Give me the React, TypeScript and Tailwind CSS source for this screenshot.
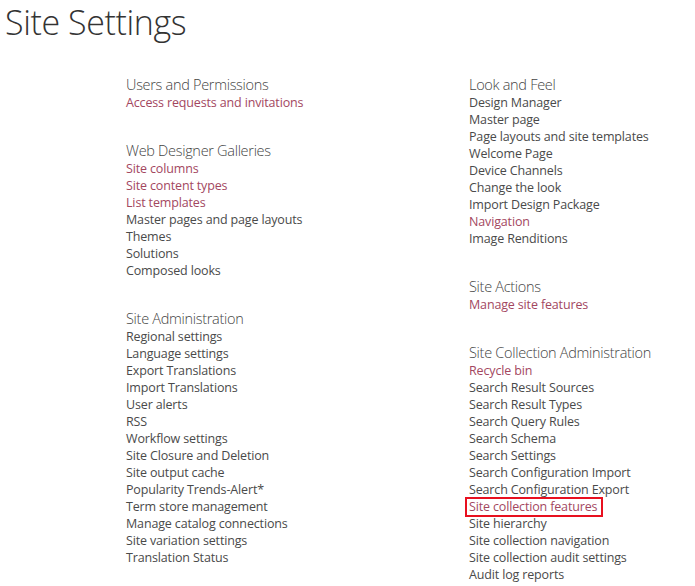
import React from "react";

type Item = { t: string; v?: boolean; box?: boolean };
type Section = { h: string; items: Item[] };

const left: Section[] = [
  { h: "Users and Permissions", items: [{ t: "Access requests and invitations", v: true }] },
  {
    h: "Web Designer Galleries",
    items: [
      { t: "Site columns", v: true },
      { t: "Site content types", v: true },
      { t: "List templates", v: true },
      { t: "Master pages and page layouts" },
      { t: "Themes" },
      { t: "Solutions" },
      { t: "Composed looks" },
    ],
  },
  {
    h: "Site Administration",
    items: [
      { t: "Regional settings" },
      { t: "Language settings" },
      { t: "Export Translations" },
      { t: "Import Translations" },
      { t: "User alerts" },
      { t: "RSS" },
      { t: "Workflow settings" },
      { t: "Site Closure and Deletion" },
      { t: "Site output cache" },
      { t: "Popularity Trends-Alert*" },
      { t: "Term store management" },
      { t: "Manage catalog connections" },
      { t: "Site variation settings" },
      { t: "Translation Status" },
    ],
  },
];

const right: Section[] = [
  {
    h: "Look and Feel",
    items: [
      { t: "Design Manager" },
      { t: "Master page" },
      { t: "Page layouts and site templates" },
      { t: "Welcome Page" },
      { t: "Device Channels" },
      { t: "Change the look" },
      { t: "Import Design Package" },
      { t: "Navigation", v: true },
      { t: "Image Renditions" },
    ],
  },
  { h: "Site Actions", items: [{ t: "Manage site features", v: true }] },
  {
    h: "Site Collection Administration",
    items: [
      { t: "Recycle bin", v: true },
      { t: "Search Result Sources" },
      { t: "Search Result Types" },
      { t: "Search Query Rules" },
      { t: "Search Schema" },
      { t: "Search Settings" },
      { t: "Search Configuration Import" },
      { t: "Search Configuration Export" },
      { t: "Site collection features", v: true, box: true },
      { t: "Site hierarchy" },
      { t: "Site collection navigation" },
      { t: "Site collection audit settings" },
      { t: "Audit log reports" },
    ],
  },
];

function Col({ sections }: { sections: Section[] }) {
  return (
    <div className="flex flex-col gap-[30px] w-[343px] shrink-0">
      {sections.map((s) => (
        <div key={s.h} className="flex flex-col">
          <div className="text-[14.5px] leading-[19px] tracking-[-0.3px] text-[#444444] font-light whitespace-nowrap">
            {s.h}
          </div>
          <ul className="flex flex-col">
            {s.items.map((i) => (
              <li key={i.t} className="text-[12.5px] leading-[17px] h-[17px] tracking-[-0.15px] whitespace-nowrap">
                {i.box ? (
                  <span className="relative text-[#a3475f]">
                    {i.t}
                    <span className="absolute left-[-4px] right-[-6px] top-[-1px] bottom-[-2px] border-2 border-[#e8101f]"></span>
                  </span>
                ) : (
                  <span className={i.v ? "text-[#a3475f]" : "text-[#4a4a4a]"}>{i.t}</span>
                )}
              </li>
            ))}
          </ul>
        </div>
      ))}
    </div>
  );
}

export default function App() {
  return (
    <div
      className="w-[695px] h-[586px] bg-white overflow-hidden"
      style={{ fontFamily: '"Open Sans", "Noto Sans", sans-serif' }}
    >
      <h1 className="pl-[5px] pt-[2px] text-[34px] leading-[40px] tracking-[-0.4px] font-light text-[#333333] whitespace-nowrap">
        Site Settings
      </h1>
      <div className="flex pl-[126px] pt-[33px]">
        <Col sections={left} />
        <Col sections={right} />
      </div>
    </div>
  );
}
